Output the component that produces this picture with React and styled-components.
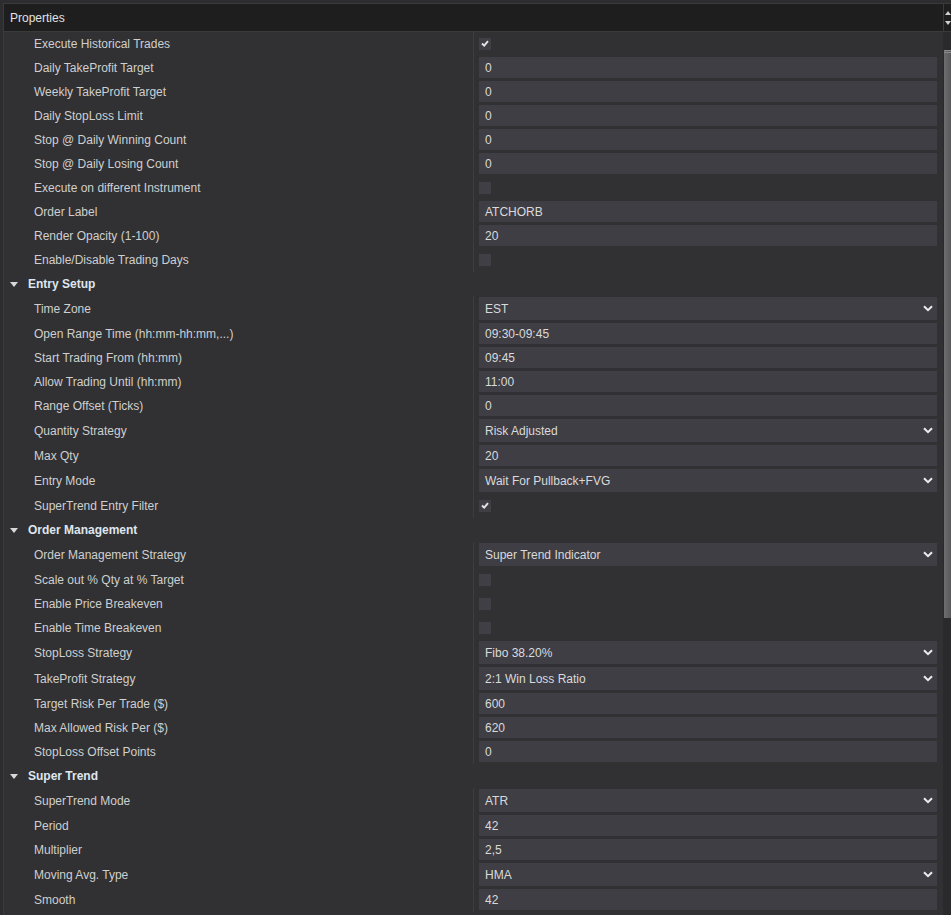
import styled, { createGlobalStyle } from "styled-components";

const GlobalStyle = createGlobalStyle`
  html, body {
    margin: 0;
    padding: 0;
    background: #2d2d30;
    font-family: "Liberation Sans", Arial, sans-serif;
    font-size: 12px;
    overflow: hidden;
  }
`;

const SECTIONS = [
  {
    title: null,
    rows: [
      { label: "Execute Historical Trades", type: "check", value: true },
      { label: "Daily TakeProfit Target", type: "text", value: "0" },
      { label: "Weekly TakeProfit Target", type: "text", value: "0" },
      { label: "Daily StopLoss Limit", type: "text", value: "0" },
      { label: "Stop @ Daily Winning Count", type: "text", value: "0" },
      { label: "Stop @ Daily Losing Count", type: "text", value: "0" },
      { label: "Execute on different Instrument", type: "check", value: false },
      { label: "Order Label", type: "text", value: "ATCHORB" },
      { label: "Render Opacity (1-100)", type: "text", value: "20" },
      { label: "Enable/Disable Trading Days", type: "check", value: false },
    ],
  },
  {
    title: "Entry Setup",
    rows: [
      { label: "Time Zone", type: "combo", value: "EST" },
      { label: "Open Range Time (hh:mm-hh:mm,...)", type: "text", value: "09:30-09:45" },
      { label: "Start Trading From (hh:mm)", type: "text", value: "09:45" },
      { label: "Allow Trading Until (hh:mm)", type: "text", value: "11:00" },
      { label: "Range Offset (Ticks)", type: "text", value: "0" },
      { label: "Quantity Strategy", type: "combo", value: "Risk Adjusted" },
      { label: "Max Qty", type: "text", value: "20" },
      { label: "Entry Mode", type: "combo", value: "Wait For Pullback+FVG" },
      { label: "SuperTrend Entry Filter", type: "check", value: true },
    ],
  },
  {
    title: "Order Management",
    rows: [
      { label: "Order Management Strategy", type: "combo", value: "Super Trend Indicator" },
      { label: "Scale out % Qty at % Target", type: "check", value: false },
      { label: "Enable Price Breakeven", type: "check", value: false },
      { label: "Enable Time Breakeven", type: "check", value: false },
      { label: "StopLoss Strategy", type: "combo", value: "Fibo 38.20%" },
      { label: "TakeProfit Strategy", type: "combo", value: "2:1 Win Loss Ratio" },
      { label: "Target Risk Per Trade ($)", type: "text", value: "600" },
      { label: "Max Allowed Risk Per ($)", type: "text", value: "620" },
      { label: "StopLoss Offset Points", type: "text", value: "0" },
    ],
  },
  {
    title: "Super Trend",
    rows: [
      { label: "SuperTrend Mode", type: "combo", value: "ATR" },
      { label: "Period", type: "text", value: "42" },
      { label: "Multiplier", type: "text", value: "2,5" },
      { label: "Moving Avg. Type", type: "combo", value: "HMA" },
      { label: "Smooth", type: "text", value: "42" },
    ],
  },
];

const Panel = styled.div`
  height: 915px;
  padding-top: 3px;
  box-sizing: border-box;
  display: flex;
  flex-direction: column;
`;

const Header = styled.div`
  height: 29px;
  margin-left: 3px;
  box-sizing: border-box;
  background: #1e1e1e;
  border: 1px solid #3a3a3c;
  border-right: none;
  display: flex;
  align-items: stretch;
`;

const Title = styled.div`
  flex: 1;
  display: flex;
  align-items: center;
  padding-left: 6px;
  color: #e2e2e2;
`;

const SortBox = styled.div`
  width: 6px;
  border-left: 1px solid #3a3a3c;
  display: flex;
  flex-direction: column;
  justify-content: center;
  gap: 6px;
  padding-left: 1px;
`;

const Body = styled.div`
  flex: 1;
  display: flex;
  min-height: 0;
  margin-left: 3px;
  border-left: 1px solid #3b3b3e;
  background: #313133;
`;

const List = styled.div`
  flex: 1;
  display: flex;
  flex-direction: column;
  overflow: hidden;
`;

const Row = styled.div`
  display: flex;
  height: ${(p) => (p.$tall ? 26 : 24)}px;
  flex-shrink: 0;
`;

const Label = styled.div`
  width: 469px;
  flex-shrink: 0;
  box-sizing: border-box;
  padding-left: 30px;
  display: flex;
  align-items: center;
  color: #cfcfcf;
  white-space: nowrap;
`;

const Cell = styled.div`
  flex: 1;
  border-left: 1px solid #3d3d40;
  padding: 1px 6px 2px 5px;
  display: flex;
  align-items: ${(p) => (p.$center ? "center" : "stretch")};
`;

const Field = styled.div`
  flex: 1;
  background: #3f3e45;
  color: #dadada;
  padding-left: 6px;
  padding-right: 4px;
  display: flex;
  align-items: center;
  justify-content: space-between;
`;

const Check = styled.div`
  width: 12px;
  height: 12px;
  background: #403f46;
  display: flex;
  align-items: center;
  justify-content: center;
`;

const Category = styled.div`
  height: 24px;
  flex-shrink: 0;
  display: flex;
  align-items: center;
  gap: 10px;
  padding-left: 6px;
  color: #dfe6ef;
  font-weight: bold;
`;

const Scrollbar = styled.div`
  width: 8px;
  flex-shrink: 0;
  background: #2a2a2c;
  display: flex;
  flex-direction: column;
`;

const Thumb = styled.div`
  margin-top: 18px;
  height: 565px;
  margin-left: 1px;
  background: linear-gradient(to right, #6e6e70, #58585a);
  border-top: 3px double #8a8a8c;
`;

const Tri = ({ up }) => (
  <svg width="6" height="4" viewBox="0 0 6 4">
    <path d={up ? "M0 4 L3 0 L6 4 Z" : "M0 0 L3 4 L6 0 Z"} fill="#cfcfcf" />
  </svg>
);

const CheckMark = () => (
  <svg width="8" height="7" viewBox="0 0 8 7">
    <path d="M1 3.5 L3.2 5.6 L7 1.2" stroke="#e4e4e4" strokeWidth="2" fill="none" />
  </svg>
);

const Chevron = () => (
  <svg width="10" height="7" viewBox="0 0 10 7">
    <path d="M1 1.2 L5 5.2 L9 1.2" stroke="#ececec" strokeWidth="2" fill="none" />
  </svg>
);

const Caret = () => (
  <svg width="8" height="5" viewBox="0 0 8 5">
    <path d="M0 0 L8 0 L4 5 Z" fill="#d8d8d8" />
  </svg>
);

const PropRow = ({ row }) => {
  if (row.type === "check") {
    return (
      <Row>
        <Label>{row.label}</Label>
        <Cell $center>
          <Check>{row.value ? <CheckMark /> : null}</Check>
        </Cell>
      </Row>
    );
  }
  return (
    <Row $tall={row.type === "combo"}>
      <Label>{row.label}</Label>
      <Cell>
        <Field>
          <span>{row.value}</span>
          {row.type === "combo" ? <Chevron /> : null}
        </Field>
      </Cell>
    </Row>
  );
};

const App = () => {
  return (
    <>
      <GlobalStyle />
      <Panel>
        <Header>
          <Title>Properties</Title>
          <SortBox>
            <Tri up />
            <Tri />
          </SortBox>
        </Header>
        <Body>
          <List>
            {SECTIONS.map((section, i) => (
              <div key={i}>
                {section.title ? (
                  <Category>
                    <Caret />
                    {section.title}
                  </Category>
                ) : null}
                {section.rows.map((row) => (
                  <PropRow key={row.label} row={row} />
                ))}
              </div>
            ))}
          </List>
          <Scrollbar>
            <Thumb />
          </Scrollbar>
        </Body>
      </Panel>
    </>
  );
};

export default App;
